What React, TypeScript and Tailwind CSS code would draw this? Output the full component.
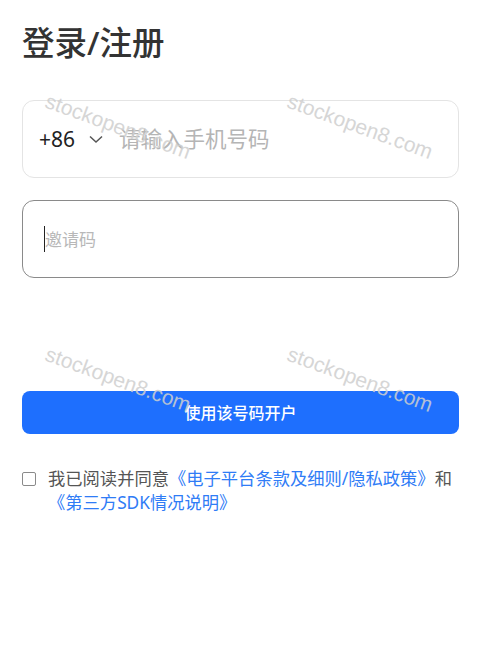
import React from "react";

const marks = [
  { left: 50, top: 90 },
  { left: 292, top: 90 },
  { left: 50, top: 343 },
  { left: 292, top: 343 },
];

export default function App() {
  return (
    <div
      className="relative min-h-[659px] w-full bg-white overflow-hidden"
      style={{ fontFamily: '"Noto Sans", "Noto Sans CJK SC", sans-serif' }}
    >
      <div className="px-[22px] pt-[27px]">
        <h1 className="text-[32.5px] leading-[32px] font-medium text-[#333]">
          登录/注册
        </h1>

        <div className="mt-[41px] h-[78px] rounded-[12px] border border-[#e4e4e4] flex items-center pl-[16px]">
          <span className="text-[21px] leading-none text-[#222]">+86</span>
          <svg
            className="ml-[14px]"
            width="14"
            height="9"
            viewBox="0 0 14 9"
            fill="none"
          >
            <path d="M1 1.5 L7 7 L13 1.5" stroke="#555" strokeWidth="1.5" />
          </svg>
          <span className="ml-[16px] text-[21.5px] leading-none text-[#b5b5b5]">
            请输入手机号码
          </span>
        </div>

        <div className="mt-[22px] h-[78px] rounded-[12px] border border-[#8a8a8a] flex items-center pl-[21px]">
          <span className="w-[1px] h-[26px] bg-[#222]"></span>
          <span className="text-[17px] leading-none text-[#b8b8b8]">邀请码</span>
        </div>

        <button className="mt-[113px] h-[43px] w-full rounded-[8px] bg-[#1e6ffe] text-white text-[16px] font-medium flex items-center justify-center">
          使用该号码开户
        </button>

        <div className="mt-[33px] flex items-start">
          <span className="mt-[5px] w-[14px] h-[14px] shrink-0 rounded-[2px] border border-[#8a8a8a] bg-white"></span>
          <p className="ml-[12px] text-[17.3px] leading-[24px] text-[#555]">
            我已阅读并同意
            <span className="text-[#2f7cf6]">《电子平台条款及细则/隐私政策》</span>和
            <span className="text-[#2f7cf6]">《第三方SDK情况说明》</span>
          </p>
        </div>
      </div>

      <div className="pointer-events-none absolute inset-0">
        {marks.map((m, i) => (
          <span
            key={i}
            className="absolute origin-top-left rotate-[20deg] text-[21px] leading-[21px] text-[#cfcfcf] whitespace-nowrap"
            style={{ left: m.left, top: m.top, fontFamily: '"Liberation Sans", Arial, sans-serif', opacity: 0.85 }}
          >
            stockopen8.com
          </span>
        ))}
      </div>
    </div>
  );
}
